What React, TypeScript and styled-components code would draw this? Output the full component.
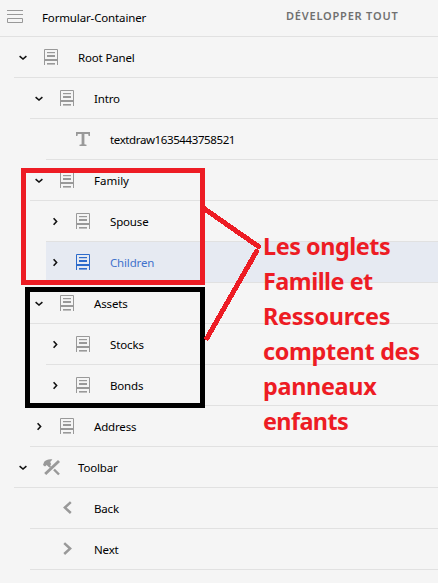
import React from 'react';
import styled, { createGlobalStyle } from 'styled-components';

const GlobalStyle = createGlobalStyle`
  * { box-sizing: border-box; }
  html, body { margin: 0; padding: 0; background: #f5f5f5; }
  body { overflow: hidden; }
`;

const Page = styled.main`
  position: relative;
  width: 438px;
  height: 583px;
  overflow: hidden;
  background: #f5f5f5;
  color: #000;
  font-family: 'Noto Sans', 'Open Sans', sans-serif;
  font-size: 11.5px;
`;

const Header = styled.header`
  display: flex;
  align-items: center;
  height: 37px;
  padding-left: 7px;
  border-bottom: 1px solid #e1e1e1;
  svg { flex: none; }
`;

const Title = styled.span`
  width: 244px;
  margin-left: 19px;
  padding-bottom: 2px;
  letter-spacing: -0.14px;
  white-space: nowrap;
`;

const ExpandAll = styled.button`
  padding: 0 0 5px;
  border: 0;
  background: none;
  color: #707070;
  font: 600 11px 'Noto Sans', sans-serif;
  letter-spacing: 0.8px;
  white-space: nowrap;
`;

const Tree = styled.ul`
  margin: 0;
  padding: 0;
  list-style: none;
`;

const Row = styled.li<{ $level: number; $selected?: boolean }>`
  display: flex;
  align-items: center;
  height: 41px;
  margin-left: ${(p) => p.$level * 16 - 2}px;
  border-bottom: 1px solid #e1e1e1;
  background: ${(p) => (p.$selected ? '#e6eaf2' : 'transparent')};
  color: ${(p) => (p.$selected ? '#4272cc' : '#000')};
`;

const Toggle = styled.span`
  display: flex;
  width: 18px;
  height: 16px;
  align-items: center;
  justify-content: center;
  color: #111;
`;

const IconSlot = styled.span<{ $selected?: boolean }>`
  display: flex;
  width: 18px;
  height: 18px;
  margin-left: 10px;
  color: ${(p) => (p.$selected ? '#2d6bcb' : '#999')};
`;

const Label = styled.span<{ $tracking?: number }>`
  margin-left: 18px;
  letter-spacing: ${(p) => p.$tracking ?? -0.16}px;
  white-space: nowrap;
`;

const HighlightBox = styled.div<{ $tone: 'red' | 'black' }>`
  position: absolute;
  left: ${(p) => (p.$tone === 'red' ? 21 : 25)}px;
  top: ${(p) => (p.$tone === 'red' ? 168 : 287)}px;
  width: ${(p) => (p.$tone === 'red' ? 184 : 180)}px;
  height: ${(p) => (p.$tone === 'red' ? 117 : 121)}px;
  border: 5px solid ${(p) => (p.$tone === 'red' ? '#ed1c24' : '#000')};
`;

const Connector = styled.svg`
  position: absolute;
  left: 200px;
  top: 200px;
`;

const Callout = styled.p`
  position: absolute;
  left: 263px;
  top: 229px;
  margin: 0;
  color: #ed1c24;
  font: 700 23.4px/35px 'Noto Sans', 'Open Sans', sans-serif;
`;

const CalloutLine = styled.span<{ $tracking: number }>`
  display: block;
  letter-spacing: ${(p) => p.$tracking}px;
  white-space: nowrap;
`;

type IconName = 'panel' | 'text' | 'tools' | 'back' | 'next';

const ContainerIcon = () => (
  <svg width="16" height="16" viewBox="0 0 16 16" fill="none" stroke="#999">
    <path d="M0 .5h16M0 4.5h16M.5 8.5h15v4H.5z" />
  </svg>
);

const Chevron = ({ open }: { open: boolean }) => (
  <svg width="12" height="12" viewBox="0 0 12 12" fill="none" stroke="currentColor" strokeWidth="1.6">
    <path d={open ? 'M2.6 5.2L6 8l3.4-2.8' : 'M4.6 3.2L7.6 6.5l-3 3.3'} />
  </svg>
);

const NodeIcon = ({ name }: { name: IconName }) => (
  <svg width="18" height="18" viewBox="0 0 18 18" fill="none" stroke="currentColor">
    {name === 'panel' && (
      <>
        <path d="M2.5 17V1.5h13V17" />
        <path d="M5 4.6h8" strokeWidth="1.2" />
        <path d="M5 8h8" strokeWidth="2" />
        <path d="M2 12h14" strokeWidth="2" />
        <path d="M5 15.8h8" strokeWidth="1.6" />
      </>
    )}
    {name === 'text' && (
      <path
        fill="currentColor"
        stroke="none"
        d="M2 2h14v4h-1.4l-.4-2h-3.8v10.3l2.1.4V16h-7v-1.3l2.1-.4V4H3.8l-.4 2H2z"
      />
    )}
    {name === 'tools' && (
      <>
        <path d="M17 3L3.2 16" strokeWidth="3" />
        <path d="M12 11.5l5 5" strokeWidth="2.4" />
        <path d="M6.2 6.8l2.2 2.2" strokeWidth="2" />
        <path fill="currentColor" stroke="none" d="M1 7l1.2-3.2C4 1.8 7 .9 10.4 1.5L8.2 4l1 2.2-2.7 2.6-1.7-1.9L3 8.6z" />
      </>
    )}
    {name === 'back' && <path d="M12.8 3.2L6.9 8.6l5.9 5.4" strokeWidth="2.5" />}
    {name === 'next' && <path d="M6.2 3.2l5.9 5.4L6.2 14" strokeWidth="2.5" />}
  </svg>
);

interface TreeNode {
  label: string;
  level: number;
  icon: IconName;
  open?: boolean;
  selected?: boolean;
  tracking?: number;
}

const nodes: TreeNode[] = [
  { label: 'Root Panel', level: 1, icon: 'panel', open: true },
  { label: 'Intro', level: 2, icon: 'panel', open: true },
  { label: 'textdraw1635443758521', level: 3, icon: 'text', tracking: -0.39 },
  { label: 'Family', level: 2, icon: 'panel', open: true, tracking: 0 },
  { label: 'Spouse', level: 3, icon: 'panel', open: false },
  { label: 'Children', level: 3, icon: 'panel', open: false, selected: true },
  { label: 'Assets', level: 2, icon: 'panel', open: true },
  { label: 'Stocks', level: 3, icon: 'panel', open: false, tracking: -0.1 },
  { label: 'Bonds', level: 3, icon: 'panel', open: false },
  { label: 'Address', level: 2, icon: 'panel', open: false },
  { label: 'Toolbar', level: 1, icon: 'tools', open: true },
  { label: 'Back', level: 2, icon: 'back' },
  { label: 'Next', level: 2, icon: 'next' },
];

const calloutLines = [
  { text: 'Les onglets', tracking: -0.45 },
  { text: 'Famille et', tracking: -0.5 },
  { text: 'Ressources', tracking: -0.32 },
  { text: 'comptent des', tracking: -0.3 },
  { text: 'panneaux', tracking: -0.32 },
  { text: 'enfants', tracking: -0.6 },
];

export default function App() {
  return (
    <Page>
      <GlobalStyle />
      <Header>
        <ContainerIcon />
        <Title>Formular-Container</Title>
        <ExpandAll>DÉVELOPPER TOUT</ExpandAll>
      </Header>
      <Tree>
        {nodes.map((n) => (
          <Row key={n.label} $level={n.level} $selected={n.selected}>
            <Toggle>{n.open !== undefined && <Chevron open={n.open} />}</Toggle>
            <IconSlot $selected={n.selected}>
              <NodeIcon name={n.icon} />
            </IconSlot>
            <Label $tracking={n.tracking}>{n.label}</Label>
          </Row>
        ))}
      </Tree>
      <HighlightBox $tone="red" />
      <HighlightBox $tone="black" />
      <Connector width="64" height="144" viewBox="0 0 64 144" fill="none" stroke="#ed1c24" strokeWidth="5">
        <path d="M4 8.5l54.5 38M56.5 51.5L7 138" strokeLinecap="round" shapeRendering="crispEdges" />
      </Connector>
      <Callout>
        {calloutLines.map((l) => (
          <CalloutLine key={l.text} $tracking={l.tracking}>
            {l.text}
          </CalloutLine>
        ))}
      </Callout>
    </Page>
  );
}
